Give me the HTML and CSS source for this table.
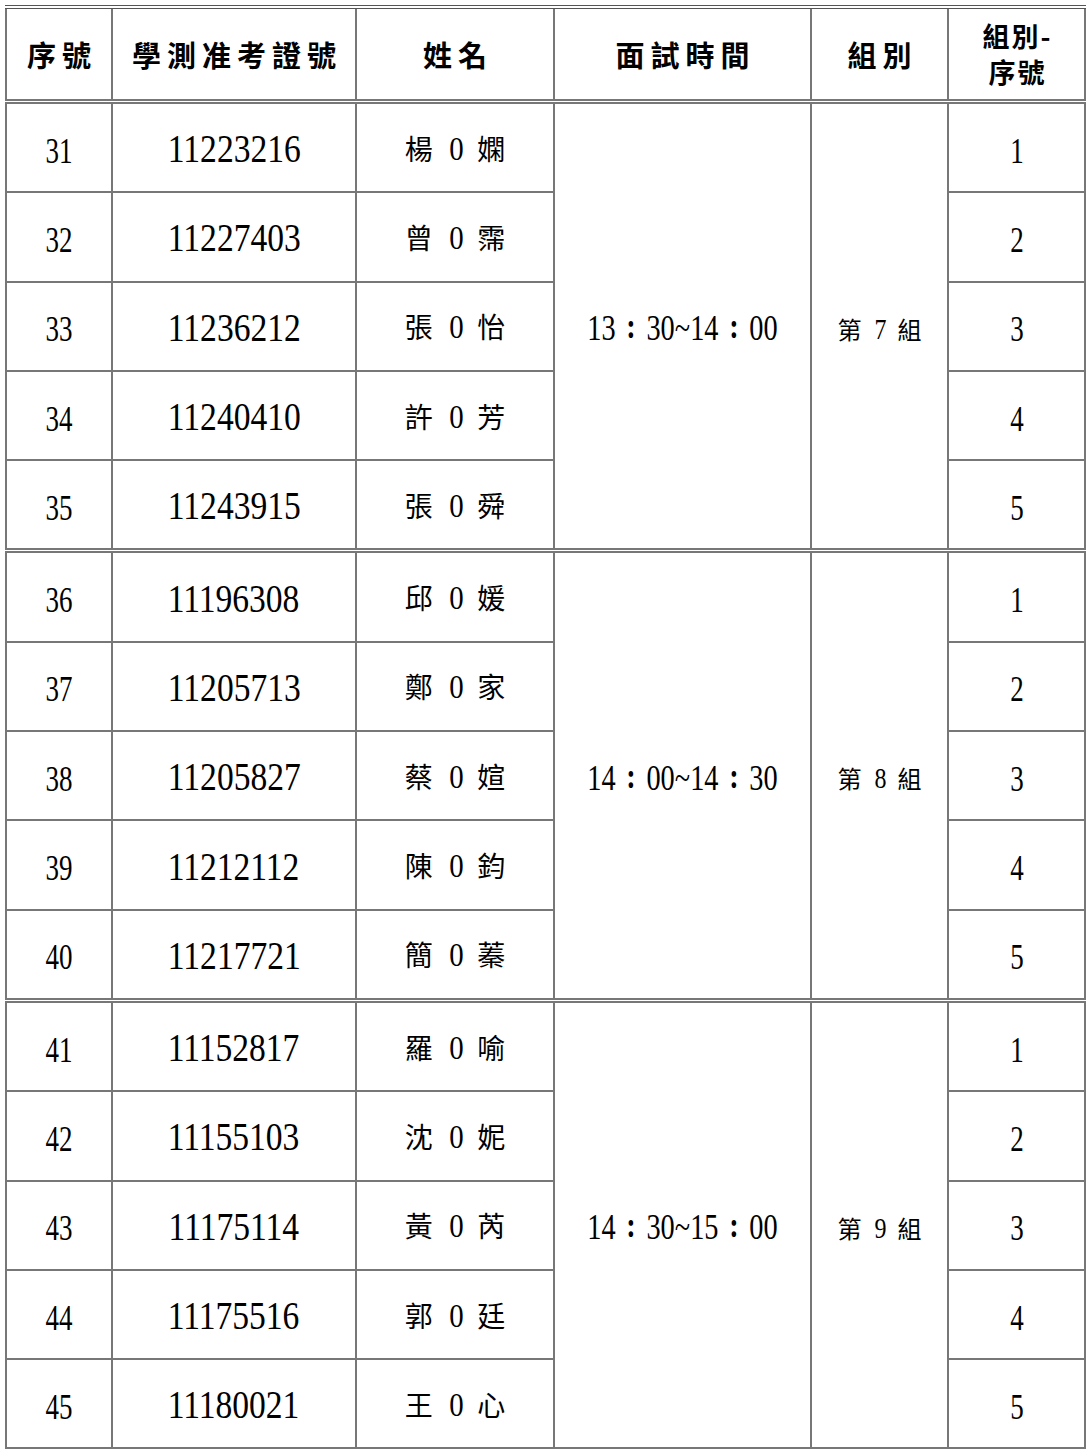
FILE: index.html
```html
<!DOCTYPE html>
<html lang="zh-Hant">
<head>
<meta charset="utf-8">
<link rel="stylesheet" href="styles.css">
</head>
<body>
<table class="roster">
  <colgroup>
    <col class="c1"><col class="c2"><col class="c3"><col class="c4"><col class="c5"><col class="c6">
  </colgroup>
  <thead>
    <tr class="head">
      <th>序號</th><th>學測准考證號</th><th>姓名</th><th>面試時間</th><th>組別</th><th class="two"><span class="ln">組別-</span><span class="ln">序號</span></th>
    </tr>
  </thead>
  <tbody>
    <tr class="first"><td class="seq"><span class="n1">31</span></td><td><span class="n2">11223216</span></td><td class="name">楊 <span class="z">0</span> 嫻</td><td class="time" rowspan="5"><span class="t">13<span class="c">:</span>30~14<span class="c">:</span>00</span></td><td class="grp" rowspan="5">第 <span class="g">7</span> 組</td><td><span class="n1">1</span></td></tr>
    <tr><td class="seq"><span class="n1">32</span></td><td><span class="n2">11227403</span></td><td class="name">曾 <span class="z">0</span> 霈</td><td><span class="n1">2</span></td></tr>
    <tr><td class="seq"><span class="n1">33</span></td><td><span class="n2">11236212</span></td><td class="name">張 <span class="z">0</span> 怡</td><td><span class="n1">3</span></td></tr>
    <tr><td class="seq"><span class="n1">34</span></td><td><span class="n2">11240410</span></td><td class="name">許 <span class="z">0</span> 芳</td><td><span class="n1">4</span></td></tr>
    <tr><td class="seq"><span class="n1">35</span></td><td><span class="n2">11243915</span></td><td class="name">張 <span class="z">0</span> 舜</td><td><span class="n1">5</span></td></tr>

    <tr class="first"><td class="seq"><span class="n1">36</span></td><td><span class="n2">11196308</span></td><td class="name">邱 <span class="z">0</span> 媛</td><td class="time" rowspan="5"><span class="t">14<span class="c">:</span>00~14<span class="c">:</span>30</span></td><td class="grp" rowspan="5">第 <span class="g">8</span> 組</td><td><span class="n1">1</span></td></tr>
    <tr><td class="seq"><span class="n1">37</span></td><td><span class="n2">11205713</span></td><td class="name">鄭 <span class="z">0</span> 家</td><td><span class="n1">2</span></td></tr>
    <tr><td class="seq"><span class="n1">38</span></td><td><span class="n2">11205827</span></td><td class="name">蔡 <span class="z">0</span> 媗</td><td><span class="n1">3</span></td></tr>
    <tr><td class="seq"><span class="n1">39</span></td><td><span class="n2">11212112</span></td><td class="name">陳 <span class="z">0</span> 鈞</td><td><span class="n1">4</span></td></tr>
    <tr><td class="seq"><span class="n1">40</span></td><td><span class="n2">11217721</span></td><td class="name">簡 <span class="z">0</span> 蓁</td><td><span class="n1">5</span></td></tr>

    <tr class="first"><td class="seq"><span class="n1">41</span></td><td><span class="n2">11152817</span></td><td class="name">羅 <span class="z">0</span> 喻</td><td class="time" rowspan="5"><span class="t">14<span class="c">:</span>30~15<span class="c">:</span>00</span></td><td class="grp" rowspan="5">第 <span class="g">9</span> 組</td><td><span class="n1">1</span></td></tr>
    <tr><td class="seq"><span class="n1">42</span></td><td><span class="n2">11155103</span></td><td class="name">沈 <span class="z">0</span> 妮</td><td><span class="n1">2</span></td></tr>
    <tr><td class="seq"><span class="n1">43</span></td><td><span class="n2">11175114</span></td><td class="name">黃 <span class="z">0</span> 芮</td><td><span class="n1">3</span></td></tr>
    <tr><td class="seq"><span class="n1">44</span></td><td><span class="n2">11175516</span></td><td class="name">郭 <span class="z">0</span> 廷</td><td><span class="n1">4</span></td></tr>
    <tr class="last"><td class="seq"><span class="n1">45</span></td><td><span class="n2">11180021</span></td><td class="name">王 <span class="z">0</span> 心</td><td><span class="n1">5</span></td></tr>
  </tbody>
</table>
</body>
</html>
```

FILE: styles.css
```css
html, body {
  margin: 0;
  padding: 0;
  background: #ffffff;
}
body {
  padding: 5px 0 0 5px;
  font-family: "Liberation Serif", "Noto Sans CJK TC", serif;
  color: #000;
}
.roster {
  border-collapse: collapse;
  table-layout: fixed;
  width: 1079px;
  border-top: 4px double #555;
  border-bottom: 2px solid #333;
}
.c1 { width: 106px; }
.c2 { width: 244px; }
.c3 { width: 198px; }
.c4 { width: 257px; }
.c5 { width: 137px; }
.c6 { width: 137px; }

.roster th,
.roster td {
  border: 2px solid #777;
  text-align: center;
  vertical-align: middle;
  padding: 0;
}
.head th {
  height: 90px;
  font-family: "Noto Sans CJK TC", sans-serif;
  font-weight: 700;
  font-size: 29px;
  letter-spacing: 6px;
  padding-left: 6px;
  border-bottom: 4px double #555;
}
.head th.two {
  font-size: 27px;
  letter-spacing: 2px;
  padding-left: 2px;
}
.ln {
  display: block;
  line-height: 36px;
}
.roster td {
  height: 87.3px;
}
.first td {
  border-top: 5px double #777;
}
.roster .head + .first td { border-top: none; }

.n1, .n2, .t, .z, .g {
  display: inline-block;
  font-family: "Liberation Serif", serif;
  transform-origin: center;
  letter-spacing: 0;
}
.n1 {
  font-size: 36px;
  transform: scaleX(0.75);
  padding-top: 6px;
}
.n2 {
  font-size: 39px;
  transform: scaleX(0.86);
  padding-top: 2px;
}
.t {
  font-size: 35px;
  transform: scaleX(0.81);
  white-space: nowrap;
  padding-top: 6px;
}
.c {
  display: inline-block;
  width: 38px;
  text-align: center;
  font-weight: 700;
  position: relative;
  top: -2px;
}
.name {
  font-family: "Noto Sans CJK TC", sans-serif;
  font-size: 28px;
  letter-spacing: 3px;
  padding-left: 3px !important;
  word-spacing: 0;
}
.z {
  font-size: 34px;
  transform: scaleX(0.85);
  margin: 0 3px;
}
.grp {
  font-family: "Noto Sans CJK TC", sans-serif;
  font-size: 24px;
  letter-spacing: 2px;
  padding-left: 2px !important;
  padding-top: 4px !important;
}
.g {
  font-size: 30px;
  transform: scaleX(0.8);
  margin: 0 2px;
}
```
